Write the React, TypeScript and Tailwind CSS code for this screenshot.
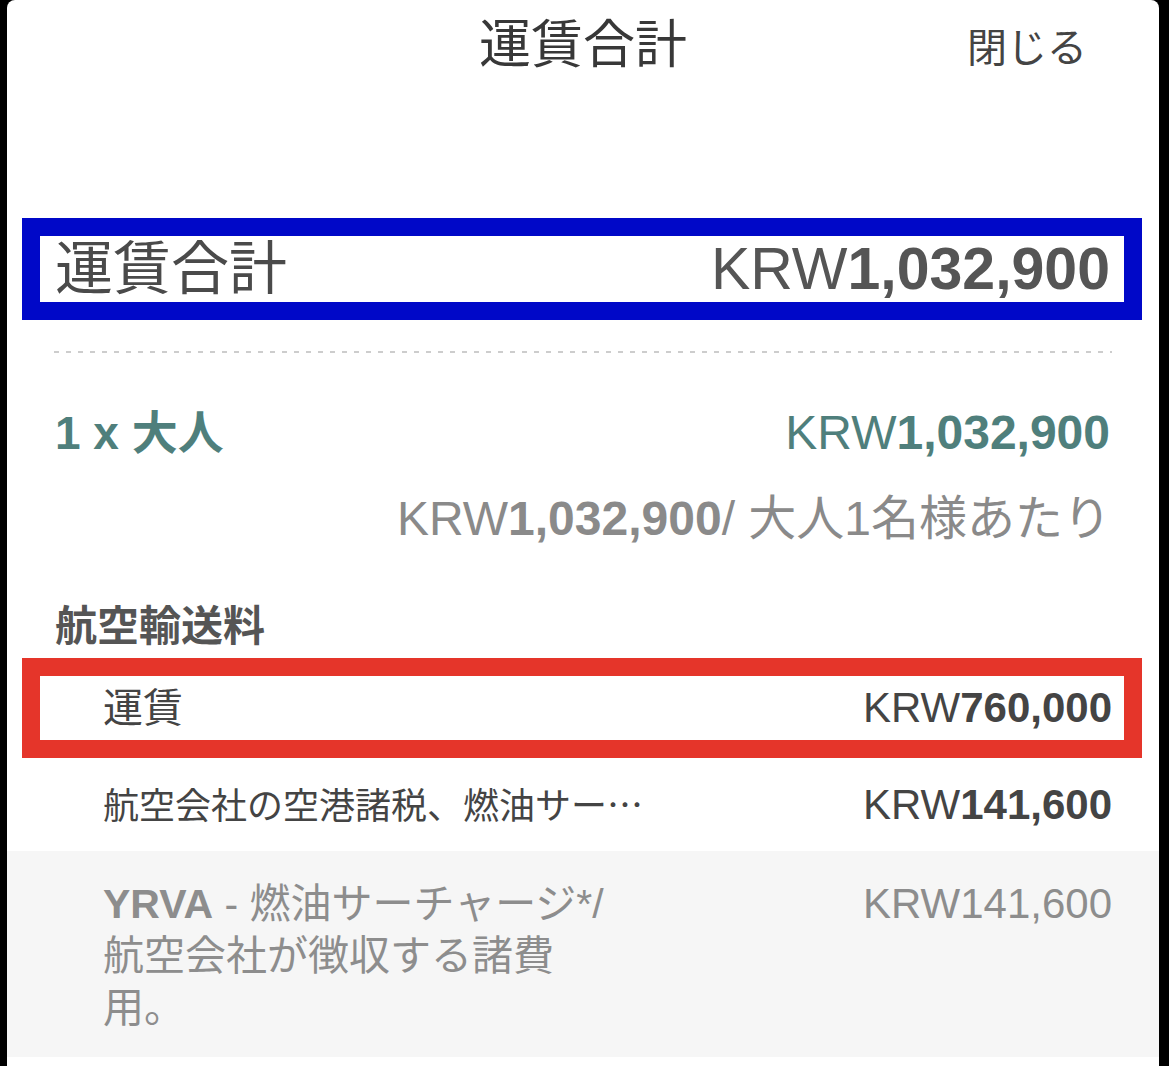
import React from "react";

function Price({ amount, bold = true }: { amount: string; bold?: boolean }) {
  return (
    <span className="whitespace-nowrap">
      KRW<span className={bold ? "font-bold" : ""}>{amount}</span>
    </span>
  );
}

export default function App() {
  return (
    <div
      lang="ja"
      className="h-[1066px] w-full bg-black flex font-['Liberation_Sans','Noto_Sans_CJK_JP',sans-serif]"
    >
      <div className="ml-[7px] mr-[10px] flex-1 bg-white rounded-t-[8px] overflow-hidden flex flex-col">
        {/* HEADER */}
        <div className="h-[90px] shrink-0 grid grid-cols-3 items-center">
          <div />
          <div className="text-center text-[52px] leading-none text-[#383838]">
            運賃合計
          </div>
          <div className="text-right pr-[72px] pt-[6px] text-[40px] leading-none text-[#444]">
            閉じる
          </div>
        </div>

        {/* TOTAL (blue frame) */}
        <div className="mt-[128px] ml-[15px] mr-[17px] h-[102px] shrink-0 border-[18px] border-[#0008c8] flex items-center justify-between pl-[15px] pr-[14px]">
          <div className="text-[58px] leading-none text-[#4a4a4a]">運賃合計</div>
          <div className="text-[59px] leading-none text-[#555]">
            <Price amount="1,032,900" />
          </div>
        </div>

        {/* DASHED DIVIDER */}
        <div className="mt-[31px] mx-[47px] h-[2px] shrink-0 bg-[repeating-linear-gradient(90deg,#cdcdcd_0_5px,transparent_5px_12px)]" />

        {/* PASSENGERS */}
        <div className="mt-[50px] h-[60px] shrink-0 pl-[48px] pr-[49px] flex items-center justify-between text-[#4f7f7c]">
          <div className="text-[46px] leading-none font-bold">1 x 大人</div>
          <div className="text-[48px] leading-none">
            <Price amount="1,032,900" />
          </div>
        </div>

        <div className="mt-[26px] h-[60px] shrink-0 px-[48px] flex items-center justify-end text-[48px] leading-none text-[#8a8a8a]">
          <Price amount="1,032,900" />
          <span>/ 大人1名様あたり</span>
        </div>

        {/* AIR TRANSPORT */}
        <div className="mt-[53px] h-[50px] shrink-0 px-[48px] flex items-center text-[42px] leading-none font-bold text-[#555]">
          航空輸送料
        </div>

        {/* FARE (red frame) */}
        <div className="mt-[6px] ml-[15px] mr-[17px] h-[100px] shrink-0 border-[18px] border-[#e5352a] flex items-center justify-between pl-[63px] pr-[12px]">
          <div className="text-[40px] leading-none text-[#444]">運賃</div>
          <div className="text-[42px] leading-none text-[#444]">
            <Price amount="760,000" />
          </div>
        </div>

        <div className="h-[93px] shrink-0 pl-[96px] pr-[47px] flex items-center justify-between">
          <div className="text-[36px] leading-none text-[#444] whitespace-nowrap">
            航空会社の空港諸税、燃油サー
            <span className="font-['Noto_Sans_CJK_JP',sans-serif] tracking-[-8px]">…</span>
          </div>
          <div className="text-[42px] leading-none text-[#444]">
            <Price amount="141,600" />
          </div>
        </div>

        {/* BREAKDOWN */}
        <div className="h-[206px] shrink-0 bg-[#f6f6f6] pl-[96px] pr-[47px] pt-[27px] flex justify-between items-start">
          <div className="text-[41px] leading-[52px] text-[#8d8d8d]">
            <span className="font-bold">YRVA</span> - 燃油サーチャージ*/
            <br />
            航空会社が徴収する諸費
            <br />
            用。
          </div>
          <div className="text-[42px] leading-[52px] text-[#8d8d8d]">
            <Price amount="141,600" bold={false} />
          </div>
        </div>

        <div className="flex-1 bg-white" />
      </div>
    </div>
  );
}
